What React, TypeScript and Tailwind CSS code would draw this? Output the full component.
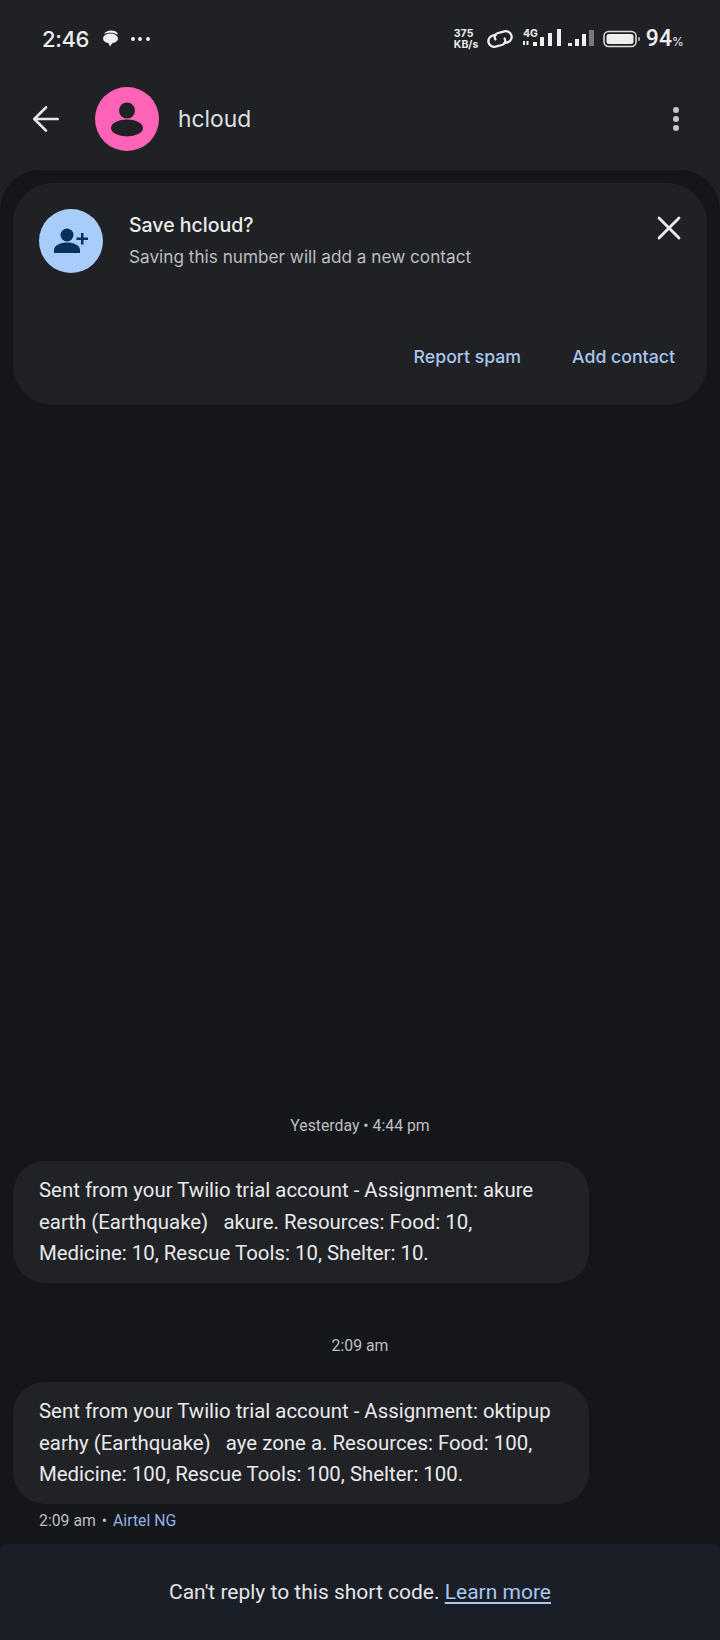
import { ArrowLeft, X } from "lucide-react";

const font = { fontFamily: "Roboto, sans-serif" };

function StatusBar() {
  return (
    <div className="h-[72px] pt-[5px] pl-[42px] pr-[38px] flex items-center justify-between text-[#eeeef0]">
      <div className="flex items-center">
        <span className="text-[22px] font-medium leading-none tracking-[-0.4px] font-['Inter',sans-serif]">2:46</span>
        <svg width="18" height="17" viewBox="0 0 18 17" className="ml-[12px]" fill="#eeeef0">
          <path d="M3 4.500C4 1.500 7 .500 10 .500s6 1 7 3.500l-1 .500C14 3 11 2.500 8 2.800 6 3 4 3.600 3 4.500z" />
          <ellipse cx="9.500" cy="8.500" rx="7.500" ry="5" />
          <path d="M7 12h5l-3 4.500z" />
        </svg>
        <div className="ml-[12px] flex gap-[3.500px]">
          <span className="size-[4px] rounded-full bg-[#eeeef0]" />
          <span className="size-[4px] rounded-full bg-[#eeeef0]" />
          <span className="size-[4px] rounded-full bg-[#eeeef0]" />
        </div>
      </div>
      <div className="flex items-center">
        <div className="w-[27px] text-[10.500px] font-bold leading-[11px] font-['Inter',sans-serif] whitespace-nowrap">
          <div>375</div>
          <div>KB/s</div>
        </div>
        <svg width="26" height="20" viewBox="0 0 25 19" className="ml-[6px]" fill="none" stroke="#eeeef0" strokeWidth="2.200">
          <g transform="rotate(-15 12.500 9.500)">
            <path d="M10.500 4.500H6.500a5.500 5.500 0 0 0 0 11H13.500a4 4 0 0 0 3-6" />
            <path d="M14.500 14.500h4a5.500 5.500 0 0 0 0-11H11.500a4 4 0 0 0-3 6" />
          </g>
        </svg>
        <svg width="39" height="22" viewBox="0 0 39 22" className="ml-[9px]" fill="#eeeef0">
          <text x="1" y="9" fontSize="10.500" fontWeight="700" fontFamily="Inter, sans-serif">4G</text>
          <rect x="1" y="13" width="2" height="4" />
          <rect x="4.500" y="13" width="2" height="4" />
          <rect x="11" y="14" width="4" height="4" />
          <rect x="18" y="9" width="4" height="9" />
          <rect x="26" y="5" width="4" height="13" />
          <rect x="35" y="1" width="4" height="17" />
        </svg>
        <svg width="28" height="18" viewBox="0 0 28 18" className="ml-[6px]" fill="#eeeef0">
          <rect x="1" y="13" width="4" height="3" />
          <rect x="8" y="9" width="4" height="7" />
          <rect x="15" y="4" width="4" height="12" />
          <rect x="22" y="0" width="5" height="16" fill="#77787b" />
        </svg>
        <svg width="38" height="18" viewBox="0 0 38 18" className="ml-[8px]">
          <rect x="1" y="1.500" width="32" height="15" rx="4.500" fill="none" stroke="#dcdcde" strokeWidth="1.500" />
          <rect x="3.500" y="4" width="27" height="10" rx="2.500" fill="#eeeef0" />
          <rect x="35" y="7" width="2" height="4" rx="1" fill="#aaaaad" />
        </svg>
        <span className="ml-[5px] text-[23px] font-medium leading-none">94</span>
        <span className="w-[10px] text-[12px] mt-[6px] font-['Inter',sans-serif]">%</span>
      </div>
    </div>
  );
}

function Header() {
  return (
    <div className="h-[94px] mb-[4px] pl-[26px] pr-[41px] flex items-center">
      <ArrowLeft size={40} strokeWidth={1.6} color="#e6e6ea" />
      <div className="ml-[29px] size-[64px] rounded-full bg-[#ff63b8] flex items-center justify-center">
        <svg width="36" height="36" viewBox="0 0 36 36" fill="#202125">
          <circle cx="18" cy="9.500" r="8" />
          <ellipse cx="18" cy="27" rx="16" ry="8.500" />
        </svg>
      </div>
      <span className="ml-[19px] text-[22.800px] text-[#dfe0e4] font-['Inter',sans-serif]">hcloud</span>
      <div className="ml-auto flex flex-col gap-[3px]">
        <span className="size-[6px] rounded-full bg-[#c6c7ce]" />
        <span className="size-[6px] rounded-full bg-[#c6c7ce]" />
        <span className="size-[6px] rounded-full bg-[#c6c7ce]" />
      </div>
    </div>
  );
}

function SaveCard() {
  return (
    <div className="mx-[13px] mt-[13px] h-[222px] rounded-[40px] bg-[#202125] px-[26px] pt-[26px]">
      <div className="flex">
        <div className="size-[64px] rounded-full bg-[#a8cdfb] flex items-center justify-center">
          <svg width="36" height="28" viewBox="0 0 36 28" fill="#04325a">
            <circle cx="14" cy="8" r="6.500" />
            <path d="M1 26v-3c0-5 7-7.500 13-7.500S27 18 27 23v3z" />
            <path d="M28 6h2.500v4.500H35V13h-4.500v4.500H28V13h-4.500v-2.500H28z" />
          </svg>
        </div>
        <div className="ml-[26px] pt-[1px] font-['Inter',sans-serif]">
          <div className="text-[19.500px] leading-[30px] font-medium text-[#ececee]">Save hcloud?</div>
          <div className="text-[17.200px] leading-[26px] mt-[4px] text-[#bcbdc2]">Saving this number will add a new contact</div>
        </div>
        <X size={40} strokeWidth={1.7} color="#ececee" className="ml-auto -mr-[8px] -mt-[1px]" />
      </div>
      <div className="mt-[71px] flex justify-end gap-[51px] pr-[6px] text-[17.700px] leading-[26px] font-medium text-[#a9c7ee] font-['Inter',sans-serif]">
        <span>Report spam</span>
        <span>Add contact</span>
      </div>
    </div>
  );
}

function Bubble({ lines }: { lines: string[] }) {
  return (
    <div className="ml-[13px] w-[576px] h-[122px] rounded-[32px] bg-[#212226] pl-[26px] pt-[14px] text-[20.400px] leading-[31.500px] text-[#e9e9ec] whitespace-pre">
      {lines.map((line) => (
        <div key={line}>{line}</div>
      ))}
    </div>
  );
}

export default function App() {
  return (
    <div className="w-[720px] h-[1640px] bg-[#202125] flex flex-col overflow-hidden" style={font}>
      <StatusBar />
      <Header />
      <div className="flex-1 flex flex-col bg-[#15161a] rounded-t-[40px]">
        <SaveCard />
        <div className="mt-auto">
          <div className="pt-[2px] text-center text-[15.800px] leading-[20px] text-[#bdbec3]">Yesterday • 4:44 pm</div>
          <div className="mt-[25px]">
            <Bubble
              lines={[
                "Sent from your Twilio trial account - Assignment: akure",
                "earth (Earthquake)   akure. Resources: Food: 10,",
                "Medicine: 10, Rescue Tools: 10, Shelter: 10.",
              ]}
            />
          </div>
          <div className="mt-[53px] text-center text-[15.800px] leading-[20px] text-[#bdbec3]">2:09 am</div>
          <div className="mt-[26px]">
            <Bubble
              lines={[
                "Sent from your Twilio trial account - Assignment: oktipup",
                "earhy (Earthquake)   aye zone a. Resources: Food: 100,",
                "Medicine: 100, Rescue Tools: 100, Shelter: 100.",
              ]}
            />
          </div>
          <div className="mt-[7px] ml-[39px] text-[15.800px] leading-[20px] text-[#bdbec3]">
            2:09 am <span className="mx-[2px]">•</span> <span className="text-[#8fb3e6]">Airtel NG</span>
          </div>
          <div className="mt-[13px] h-[96px] bg-[#1a1e26] rounded-t-[8px] flex items-center justify-center pt-[2px] text-[21px] text-[#e4e5e8]">
            <span>
              Can't reply to this short code.{" "}
              <span className="underline underline-offset-[3px] text-[#a9c7ee]">Learn more</span>
            </span>
          </div>
        </div>
      </div>
    </div>
  );
}
